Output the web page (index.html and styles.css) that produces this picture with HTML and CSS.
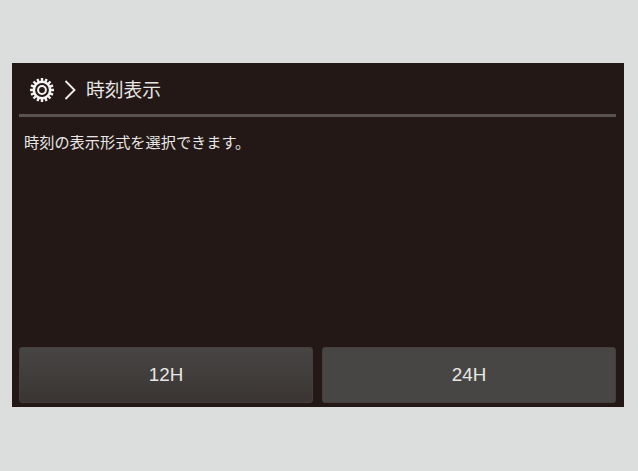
FILE: index.html
```html
<!DOCTYPE html>
<html lang="ja">
<head>
  <meta charset="UTF-8">
  <title>時刻表示</title>
  <link rel="stylesheet" href="styles.css">
</head>
<body>
  <main class="screen">
    <header class="title-bar">
      <svg class="gear" viewBox="0 0 26 26" width="26" height="26">
        <path class="gear-teeth" d="M13 1v24M1 13h24M4.500 4.500l17 17M21.500 4.500l-17 17M8.400 2l9.200 22M17.600 2l-9.200 22M2 8.400l22 9.200M24 8.400l-22 9.200"/>
        <circle class="gear-body" cx="13" cy="13" r="9.400"/>
        <circle class="gear-gap" cx="13" cy="13" r="6.900"/>
        <circle class="gear-ring" cx="13" cy="13" r="3.900"/>
      </svg>
      <svg class="chevron" viewBox="0 0 12 20" width="12" height="20">
        <path d="M1.500 1L10.500 10L1.500 19"/>
      </svg>
      <h1 class="title">時刻表示</h1>
    </header>
    <div class="content">
      <p class="description">時刻の表示形式を選択できます。</p>
    </div>
    <div class="buttons">
      <button class="btn">12H</button>
      <button class="btn btn-light">24H</button>
    </div>
  </main>
</body>
</html>
```

FILE: styles.css
```css
/* page */
html, body {
  margin: 0;
  padding: 0;
  height: 100%;
  background-color: #dcdedd;
  overflow: hidden;
}

body {
  padding: 63px 14px 0 12px;
  box-sizing: border-box;
  font-family: "Noto Sans CJK JP", "Liberation Sans", sans-serif;
}

/* device screen */
.screen {
  height: 344px;
  background-color: #231815;
  color: #f2f2f2;
  display: flex;
  flex-direction: column;
  padding: 0 8px 4px 7px;
  box-sizing: border-box;
}

/* title */
.title-bar {
  height: 54px;
  flex-shrink: 0;
  display: flex;
  align-items: center;
  padding-left: 9px;
  box-sizing: border-box;
  border-bottom: 3px solid #59534f;
}

.gear {
  flex-shrink: 0;
  margin: 2px 0 0 1px;
}

.gear-teeth {
  fill: none;
  stroke: #f4f4f4;
  stroke-width: 2.4;
}

.gear-body {
  fill: #f4f4f4;
}

.gear-gap {
  fill: #231815;
}

.gear-ring {
  fill: #231815;
  stroke: #f4f4f4;
  stroke-width: 2;
}

.chevron {
  margin: 2px 0 0 9px;
  flex-shrink: 0;
}

.chevron path {
  fill: none;
  stroke: #ececec;
  stroke-width: 1.9;
}

.title {
  margin: 2px 0 0 10px;
  font-size: 18.800px;
  font-weight: 400;
  line-height: 1;
  color: #e6e6e6;
}

/* body text */
.content {
  flex: 1;
  padding: 14px 0 0 5px;
}

.description {
  margin: 0;
  font-size: 15.200px;
  line-height: 20px;
  color: #e8e7e6;
}

/* bottom buttons */
.buttons {
  display: flex;
  gap: 9px;
}

.btn {
  flex: 1;
  height: 56px;
  border: 1px solid #453f3c;
  border-radius: 3px;
  background: linear-gradient(to bottom, #474544, #3a3533);
  color: #e6e6e6;
  font-family: "Liberation Sans", Arial, sans-serif;
  font-size: 18.800px;
  padding: 0;
}

.btn-light {
  background: #484644;
}
```
